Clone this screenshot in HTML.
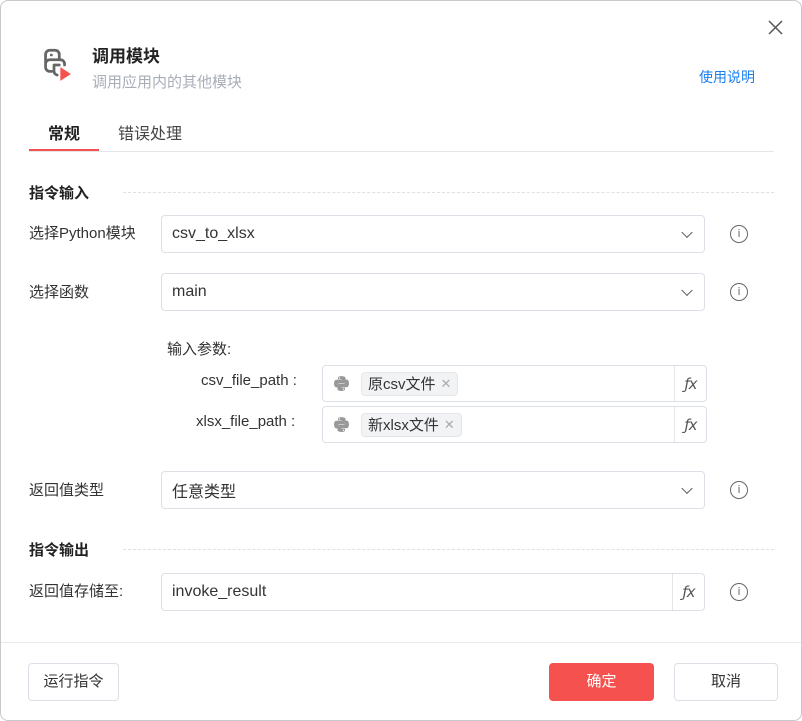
<!DOCTYPE html><html><head><meta charset="utf-8"><style>
*{box-sizing:border-box;margin:0;padding:0}
body{width:802px;height:721px;background:#fff;font-family:"Liberation Sans","Noto Sans CJK SC",sans-serif;color:#333;position:relative;overflow:hidden;font-size:15px}
.dlg{position:absolute;left:0;top:0;width:802px;height:721px;border:1px solid #c9c9c9;border-radius:8px}
.a{position:absolute}
.box{position:absolute;border:1px solid #dcdfe6;border-radius:4px;background:#fff;display:flex;align-items:center;padding-left:10px;font-size:16px;color:#333}
.chev{position:absolute;right:13px;top:50%;width:8px;height:8px;border-right:1.3px solid #555;border-bottom:1.3px solid #555;transform:translateY(-70%) rotate(45deg)}
.info{position:absolute;width:18px;height:18px;border:1.2px solid #666;border-radius:50%;font-size:11px;text-align:center;line-height:16px;color:#666;font-family:"DejaVu Sans",sans-serif}
.lbl{position:absolute;font-size:15px;color:#333}
.sec{position:absolute;font-size:15px;font-weight:bold;color:#222}
.dash{position:absolute;border-top:1px dashed #dde0e6;height:0}
.fx{position:absolute;right:0;top:0;bottom:0;width:32px;border-left:1px solid #e4e6eb;font-style:italic;font-family:"DejaVu Sans",sans-serif;font-size:15px;color:#555;text-align:center;line-height:36px;letter-spacing:-1px}
.tag{background:#f2f3f5;border:1px solid #e4e6eb;border-radius:4px;height:24px;padding:0 6px;font-size:15px;display:flex;align-items:center;margin-left:10px;color:#333}
.tag span{color:#aaa;margin-left:5px;font-size:13px}
.btn{position:absolute;border:1px solid #dcdfe6;border-radius:4px;font-size:15px;text-align:center;line-height:36px;color:#333;background:#fff}
</style></head><body><div class="dlg">
<svg class="a" style="left:34px;top:44px" width="38" height="38" viewBox="0 0 36 36"><g fill="none" stroke="#666" stroke-width="2.6" stroke-linejoin="round" stroke-linecap="round"><path d="M10 17V9a4 4 0 0 1 4-4h5a4 4 0 0 1 4 4v5H14a4 4 0 0 0-4 4v3a4 4 0 0 0 4 4h2"/><path d="M23 14h1a4 4 0 0 1 4 4v1"/><path d="M18 19h5M18 19v6a4 4 0 0 0 3 3.5"/></g><circle cx="15.5" cy="9.5" r="1.3" fill="#666"/><path d="M24 21l10 6.5-10 6.5z" fill="#f5514f"/></svg>
<div class="a" style="left:91px;top:41px;font-size:17px;font-weight:bold;color:#222">调用模块</div>
<div class="a" style="left:91px;top:70px;font-size:15px;color:#a8adb8">调用应用内的其他模块</div>
<div class="a" style="left:698px;top:66px;font-size:14px;color:#1a7ff0">使用说明</div>
<svg class="a" style="left:767px;top:19px" width="15" height="15" viewBox="0 0 15 15"><path d="M1 1L14 14M14 1L1 14" stroke="#555" stroke-width="1.5"/></svg>
<div class="a" style="left:47px;top:119px;font-size:16px;font-weight:bold;color:#222">常规</div>
<div class="a" style="left:117px;top:119px;font-size:16px;color:#444">错误处理</div>
<div class="a" style="left:28px;top:150px;width:745px;height:1px;background:#e4e6eb"></div>
<div class="a" style="left:28px;top:148px;width:70px;height:2px;background:#f5514f"></div>
<div class="sec" style="left:28px;top:181px">指令输入</div><div class="dash" style="left:122px;top:191px;width:651px"></div>
<div class="lbl" style="left:28px;top:221px">选择Python模块</div>
<div class="box" style="left:160px;top:214px;width:544px;height:38px">csv_to_xlsx<div class="chev"></div></div>
<div class="info" style="left:729px;top:224px">i</div>
<div class="lbl" style="left:28px;top:280px">选择函数</div>
<div class="box" style="left:160px;top:272px;width:544px;height:38px">main<div class="chev"></div></div>
<div class="info" style="left:729px;top:282px">i</div>
<div class="lbl" style="left:166px;top:337px">输入参数:</div>
<div class="lbl" style="left:200px;top:371px">csv_file_path :</div>
<div class="lbl" style="left:195px;top:412px">xlsx_file_path :</div>
<div class="box" style="left:321px;top:364px;width:385px;height:37px"><svg width="17" height="17" viewBox="0 0 16 16"><path d="M7.9 1C4.5 1 4.7 2.5 4.7 2.5V4h3.3v.5H3.4S1 4.2 1 8c0 3.7 2.1 3.6 2.1 3.6h1.3V9.9s-.1-2.1 2-2.1h3.4s2 0 2-1.9V2.9S12.1 1 7.9 1zM6.1 2a.6.6 0 1 1 0 1.2.6.6 0 0 1 0-1.2z" fill="#999"/><path d="M8.1 15c3.4 0 3.2-1.5 3.2-1.5V12H8v-.5h4.6S15 11.8 15 8c0-3.7-2.1-3.6-2.1-3.6h-1.3v1.7s.1 2.1-2 2.1H6.2s-2 0-2 1.9v3.1S3.9 15 8.1 15zm1.8-1a.6.6 0 1 1 0-1.2.6.6 0 0 1 0 1.2z" fill="#999"/></svg><div class="tag" style="margin-left:11px">原csv文件<span>✕</span></div><div class="fx">ƒx</div></div>
<div class="box" style="left:321px;top:405px;width:385px;height:37px"><svg width="17" height="17" viewBox="0 0 16 16"><path d="M7.9 1C4.5 1 4.7 2.5 4.7 2.5V4h3.3v.5H3.4S1 4.2 1 8c0 3.7 2.1 3.6 2.1 3.6h1.3V9.9s-.1-2.1 2-2.1h3.4s2 0 2-1.9V2.9S12.1 1 7.9 1zM6.1 2a.6.6 0 1 1 0 1.2.6.6 0 0 1 0-1.2z" fill="#999"/><path d="M8.1 15c3.4 0 3.2-1.5 3.2-1.5V12H8v-.5h4.6S15 11.8 15 8c0-3.7-2.1-3.6-2.1-3.6h-1.3v1.7s.1 2.1-2 2.1H6.2s-2 0-2 1.9v3.1S3.9 15 8.1 15zm1.8-1a.6.6 0 1 1 0-1.2.6.6 0 0 1 0 1.2z" fill="#999"/></svg><div class="tag" style="margin-left:11px">新xlsx文件<span>✕</span></div><div class="fx">ƒx</div></div>
<div class="lbl" style="left:28px;top:478px">返回值类型</div>
<div class="box" style="left:160px;top:470px;width:544px;height:38px">任意类型<div class="chev"></div></div>
<div class="info" style="left:729px;top:480px">i</div>
<div class="sec" style="left:28px;top:538px">指令输出</div><div class="dash" style="left:122px;top:548px;width:651px"></div>
<div class="lbl" style="left:28px;top:579px">返回值存储至:</div>
<div class="box" style="left:160px;top:572px;width:544px;height:38px">invoke_result<div class="fx">ƒx</div></div>
<div class="info" style="left:729px;top:582px">i</div>
<div class="a" style="left:0;top:641px;width:800px;height:1px;background:#e8e9ec"></div>
<div class="btn" style="left:27px;top:662px;width:91px;height:38px">运行指令</div>
<div class="btn" style="left:548px;top:662px;width:105px;height:38px;background:#f5514f;border-color:#f5514f;color:#fff">确定</div>
<div class="btn" style="left:673px;top:662px;width:104px;height:38px">取消</div>
</div></body></html>
